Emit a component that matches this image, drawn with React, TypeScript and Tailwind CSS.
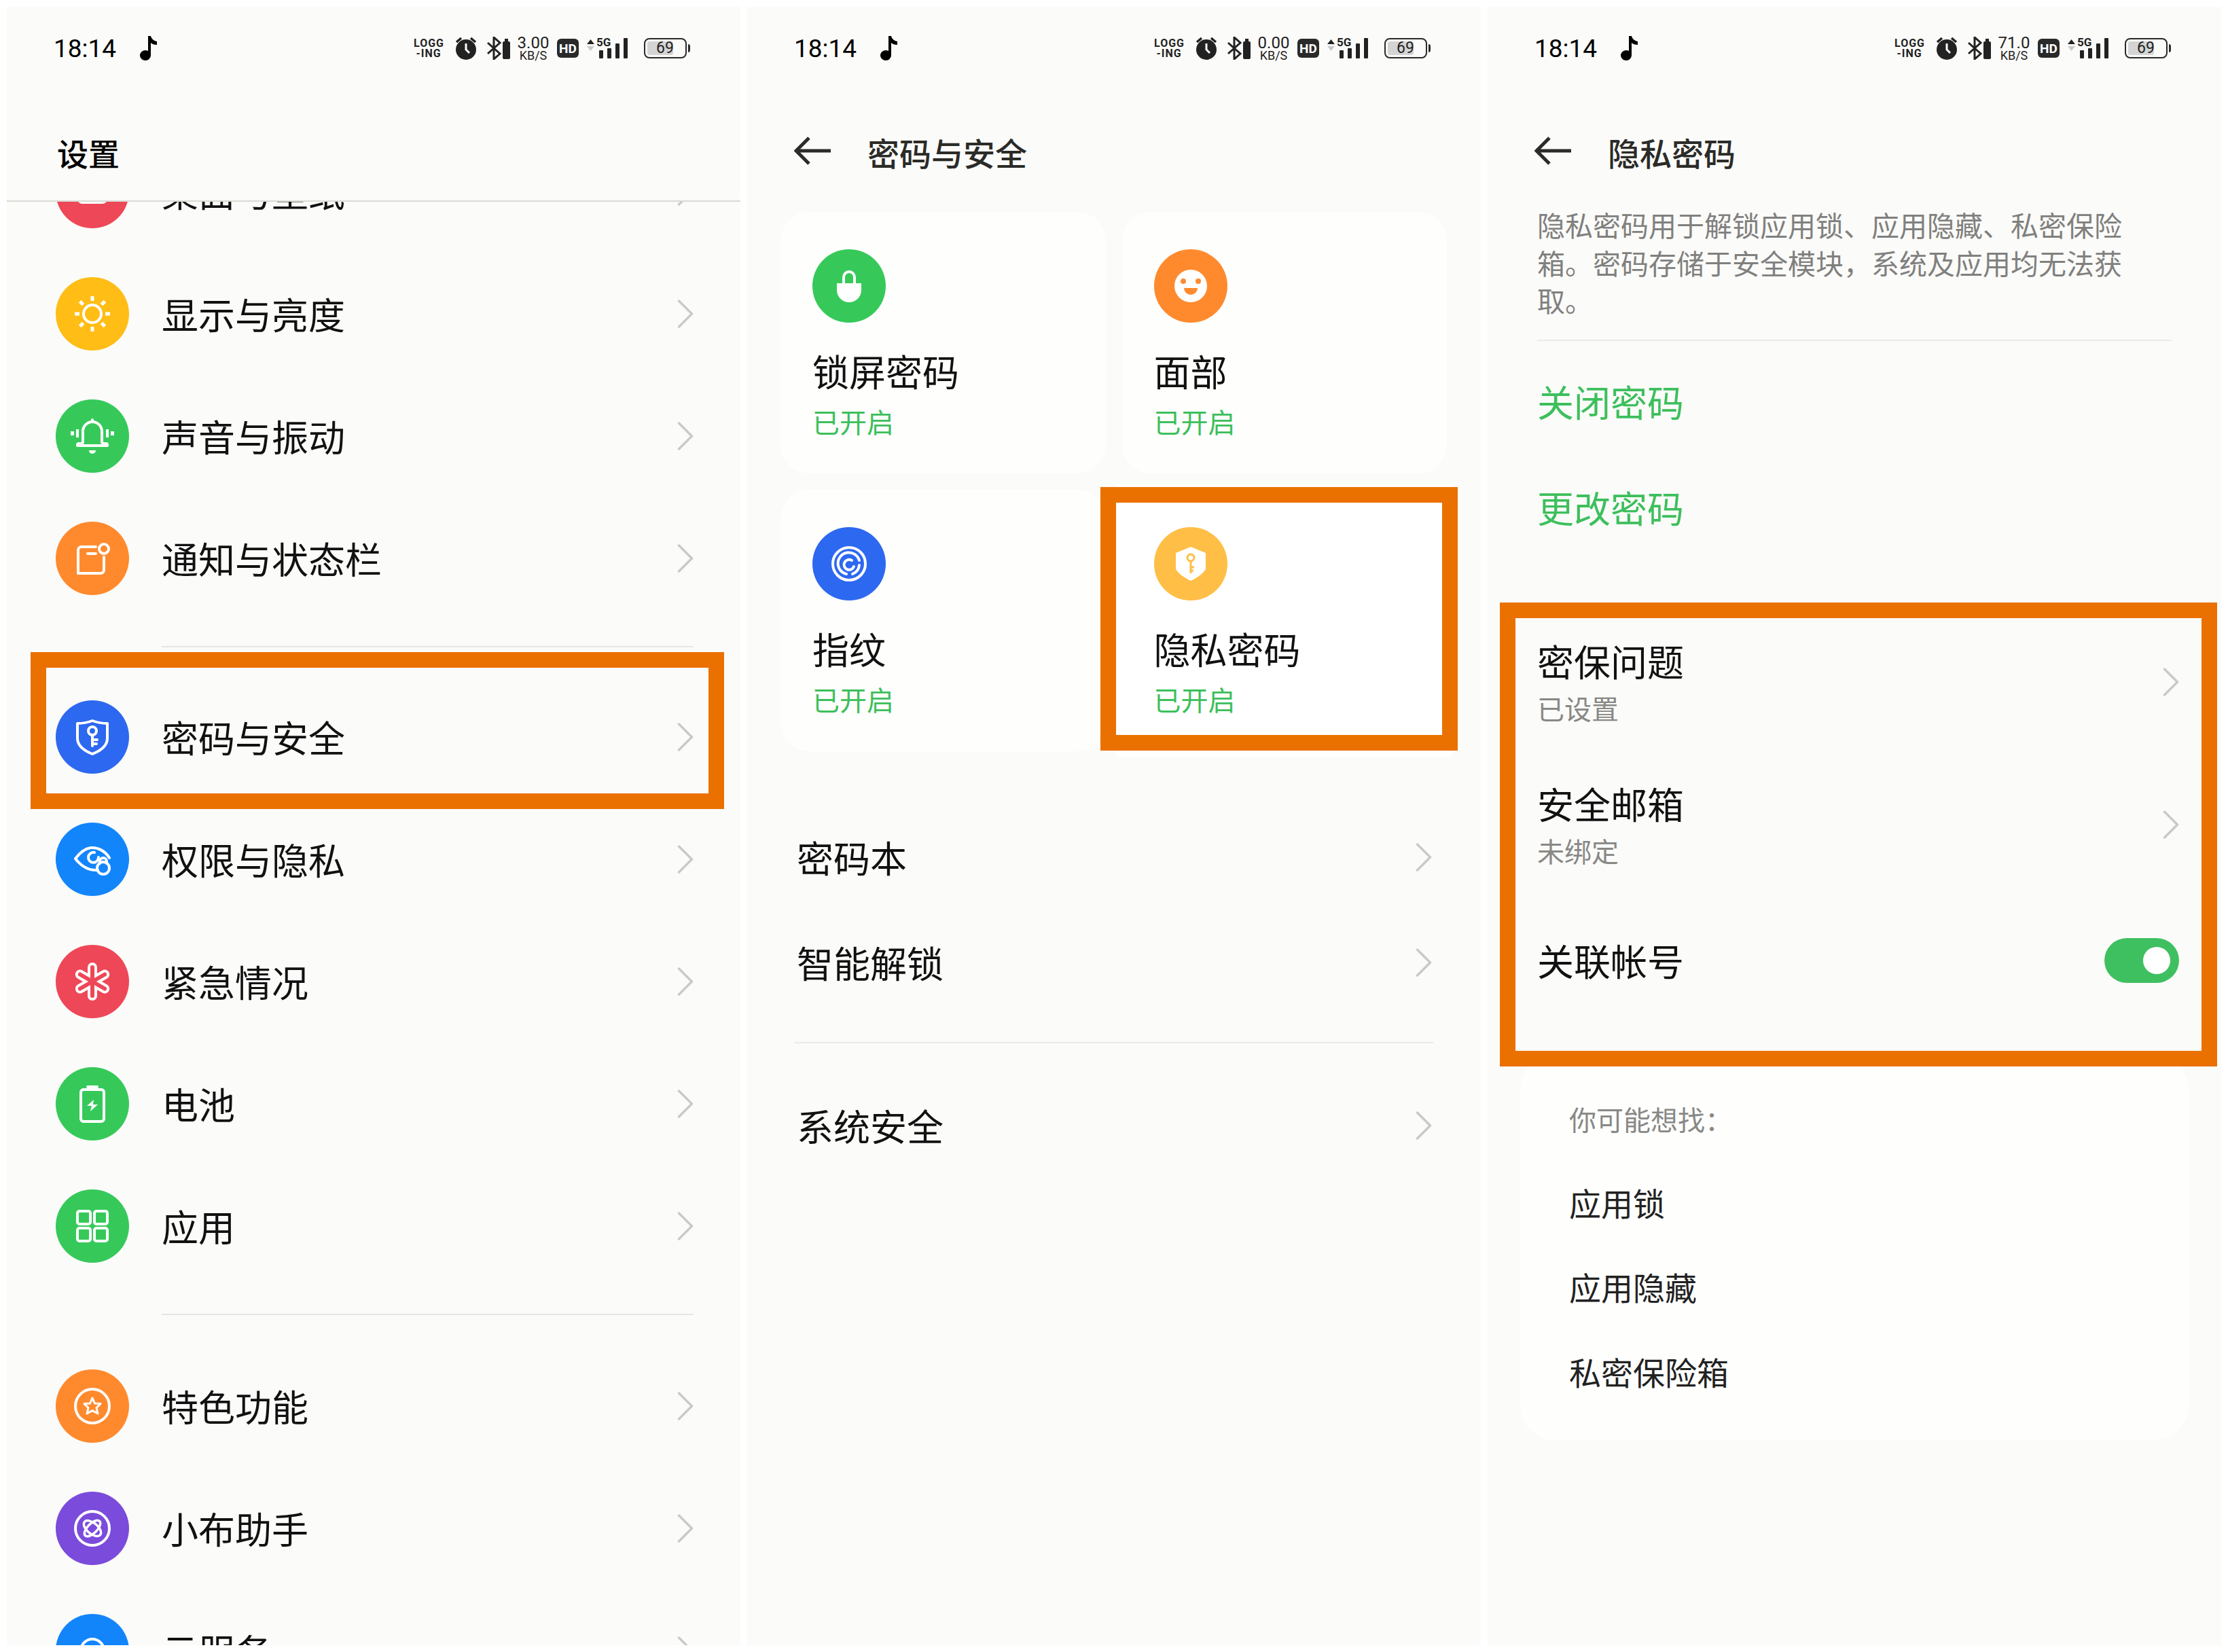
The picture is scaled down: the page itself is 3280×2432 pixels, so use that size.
import type { ReactNode } from "react"

const W = { fill: "none", stroke: "#fff", strokeWidth: 4, strokeLinecap: "round", strokeLinejoin: "round" } as const

// white line icons, centred on 0,0 in a 108px circle
const icons: Record<string, ReactNode> = {
  desktop: <rect x="-20" y="-20" width="40" height="36" rx="5" {...W} />,
  sun: (
    <g>
      <circle r="13" {...W} />
      <g fill="#fff">
        {[0, 45, 90, 135, 180, 225, 270, 315].map((a) => (
          <rect key={a} x="-2.5" y="-26" width="5" height="7" transform={`rotate(${a})`} />
        ))}
      </g>
    </g>
  ),
  bell: (
    <g>
      <path d="M-14 9 V-7 a14 14 0 0 1 28 0 V9 a3 3 0 0 0 3 2 h3 a2 2 0 0 1 2 2 v1 h-44 v-1 a2 2 0 0 1 2 -2 h3 a3 3 0 0 0 3 -2 Z" {...W} />
      <path d="M0 -24 v3" {...W} />
      <path d="M-5 21 h10 a5 5 0 0 1 -10 0 Z" fill="#fff" />
      <g fill="#fff">
        <rect x="-24" y="-10" width="4" height="12" />
        <rect x="20" y="-10" width="4" height="12" />
        <rect x="-32" y="-7" width="5" height="6" />
        <rect x="27" y="-7" width="5" height="6" />
      </g>
    </g>
  ),
  notify: (
    <g>
      <path d="M5 -17 H-16 a5 5 0 0 0 -5 5 V22 H12 a5 5 0 0 0 5 -5 V-2" {...W} />
      <path d="M-7 -7 H5" {...W} />
      <circle cx="17" cy="-14" r="7" {...W} />
    </g>
  ),
  shield: (
    <g>
      <path d="M0 -24 C8 -21 15 -20 22 -20 V2 C22 14 10 21 0 25 C-10 21 -22 14 -22 2 V-20 C-15 -20 -8 -21 0 -24 Z" {...W} />
      <circle cy="-9" r="6" {...W} />
      <path d="M0 -3 V13 M0 4 H7 M0 10 H6" {...W} />
    </g>
  ),
  eye: (
    <g>
      <path d="M25 -2 C19 -12 8 -18 -2 -17 C-11 -16 -19 -9 -25 -1 C-17 10 -5 17 8 16" {...W} />
      <path d="M3 -10 A7.5 7.5 0 1 0 9 -3" {...W} />
      <circle cx="16" cy="13" r="9" {...W} />
      <path d="M11 6 v-3 a5 5 0 0 1 10 0 v3" {...W} />
    </g>
  ),
  star6: (
    <g strokeLinecap="round" fill="none">
      {[0, 60, 120].map((a) => (
        <path key={a} d="M0 -21 V21" stroke="#fff" strokeWidth="14" transform={`rotate(${a})`} />
      ))}
      {[0, 60, 120].map((a) => (
        <path key={a} d="M0 -21 V21" stroke="#ee4757" strokeWidth="6" transform={`rotate(${a})`} />
      ))}
    </g>
  ),
  battery: (
    <g>
      <rect x="-17" y="-21" width="34" height="47" rx="4" {...W} />
      <path d="M-7 -25 H7" {...W} />
      <path d="M2 -6 L-8 3 H-1 L-3 11 L8 1 H1 Z" fill="#fff" />
    </g>
  ),
  apps: (
    <g>
      <rect x="-22" y="-22" width="19" height="19" rx="3" {...W} />
      <rect x="3" y="-22" width="19" height="19" rx="3" {...W} />
      <rect x="-22" y="3" width="19" height="19" rx="3" {...W} />
      <rect x="3" y="3" width="19" height="19" rx="3" {...W} />
    </g>
  ),
  feature: (
    <g>
      <circle r="25" {...W} />
      <path d="M0 -12 L3.5 -4 L12 -3.5 L6 2.5 L8 11 L0 6.5 L-8 11 L-6 2.5 L-12 -3.5 L-3.5 -4 Z" {...W} strokeWidth="3" />
    </g>
  ),
  breeno: (
    <g>
      <circle r="25" {...W} />
      <g transform="rotate(-45)">
        <ellipse rx="15" ry="7" {...W} strokeWidth="3.5" />
      </g>
      <g transform="rotate(40)">
        <ellipse rx="15" ry="8" {...W} strokeWidth="3.5" />
      </g>
    </g>
  ),
  cloud: <circle r="17" {...W} />,
  lock: (
    <g>
      <path d="M-18 -4 H18 V6 A18 18 0 0 1 -18 6 Z" fill="#fff" />
      <path d="M-8 -4 V-13 A8 8 0 0 1 8 -13 V-4" {...W} />
    </g>
  ),
  face: (
    <g>
      <circle r="24" fill="#fff" />
      <circle cx="-11" cy="-7" r="4" fill="#ff8a2d" />
      <circle cx="11" cy="-7" r="4" fill="#ff8a2d" />
      <path d="M-10 3 H10 A10 10 0 0 1 -10 3 Z" fill="#ff8a2d" />
    </g>
  ),
  finger: (
    <g>
      <circle r="24" {...W} />
      <path d="M-4 15 A16 16 0 1 1 15 -5" {...W} />
      <path d="M15 2 A16 16 0 0 1 5 15" {...W} />
      <path d="M4 -5 A7.5 7.5 0 1 0 7 4" {...W} />
    </g>
  ),
  privacy: (
    <g>
      <path d="M0 -25 L22 -16 V8 C18 15 8 21 0 25 C-8 21 -18 15 -22 8 V-16 Z" fill="#fff" />
      <circle cy="-9" r="5" fill="none" stroke="#ffbe45" strokeWidth="3" />
      <path d="M0 -4 V14 M0 5 H5 M0 10 H4" stroke="#ffbe45" strokeWidth="3" fill="none" />
    </g>
  ),
}

function CircleIcon({ name, bg }: { name: string; bg: string }) {
  return (
    <div className={`flex h-[108px] w-[108px] shrink-0 items-center justify-center rounded-full ${bg}`}>
      <svg width="108" height="108" viewBox="-54 -54 108 108">
        {icons[name]}
      </svg>
    </div>
  )
}

function Chevron() {
  return (
    <svg width="24" height="42" viewBox="0 0 24 42" className="shrink-0">
      <path d="M2.5 2 L21.5 21 L2.5 40" transform="" fill="none" stroke="#c9c9c7" strokeWidth="3.5" strokeLinecap="round" strokeLinejoin="round" />
    </svg>
  )
}

function StatusBar({ speed }: { speed: string }) {
  return (
    <div className="flex h-[122px] shrink-0 items-center pl-[69px] pr-[74px] text-[#222] font-['Roboto',sans-serif]">
      <span className="text-[37px] leading-none text-black">18:14</span>
      <svg width="27" height="36" viewBox="0 0 27 36" className="ml-[34px]">
        <path d="M13 0 h4 c1 4 4 7 9 8 v5 c-4 0 -7 -1 -9 -3 v18 a8 7.5 0 1 1 -4 -6 Z" fill="#000" />
      </svg>
      <div className="ml-auto flex items-center">
        <div className="w-[44px] text-center text-[16px] font-bold leading-[15px] tracking-[1px]">
          <div>LOGG</div>
          <div>-ING</div>
        </div>
        <svg width="34" height="36" viewBox="0 0 34 36" className="ml-[16px]">
          <circle cx="17" cy="20" r="15" fill="#222" />
          <path d="M17 11 V20 L22 25" fill="none" stroke="#fbfbf9" strokeWidth="3" />
          <path d="M3 9 L10 3 M31 9 L24 3" stroke="#222" strokeWidth="3.5" />
        </svg>
        <svg width="34" height="34" viewBox="0 0 34 34" className="ml-[14px]">
          <path d="M1 9 L19 25 L10 33 V1 L19 9 L1 25" fill="none" stroke="#222" strokeWidth="3" />
          <rect x="23" y="7" width="11" height="26" rx="2" fill="#222" />
          <rect x="26" y="3" width="5" height="4" fill="#222" />
        </svg>
        <div className="ml-[8px] w-[52px] text-center leading-none">
          <div className="text-[24px] leading-[21px]">{speed}</div>
          <div className="text-[18px] leading-[16px]">KB/S</div>
        </div>
        <div className="ml-[9px] flex h-[28px] w-[32px] items-center justify-center rounded-[6px] bg-[#2a2a2a] text-[19px] font-bold leading-none text-white">
          HD
        </div>
        <svg width="11" height="20" viewBox="0 0 11 20" className="ml-[12px] mb-[8px]">
          <path d="M5.5 1 L11 8 H0 Z" fill="#222" />
          <path d="M5.5 18 L11 11 H0 Z" fill="#c9c9c9" />
        </svg>
        <div className="relative ml-[3px] flex h-[30px] w-[58px] items-end gap-[6px] pl-[4px]">
          <span className="absolute left-0 top-[-3px] text-[17px] font-bold leading-[18px]">5G</span>
          <i className="h-[12px] w-[6px] rounded-[1px] bg-[#222]" />
          <i className="h-[15px] w-[6px] rounded-[1px] bg-[#222]" />
          <i className="h-[22px] w-[6px] rounded-[1px] bg-[#222]" />
          <i className="h-[30px] w-[6px] rounded-[1px] bg-[#222]" />
        </div>
        <div className="relative ml-[12px] flex h-[30px] w-[63px] items-center rounded-[8px] border-2 border-[#2a2a2a] p-[3px]">
          <div className="h-full w-[38px] rounded-[3px] bg-[#d4d4d4]" />
          <span className="absolute left-[16px] top-[1px] text-[23px] leading-[24px]">69</span>
        </div>
        <div className="ml-[2px] h-[12px] w-[3px] rounded-r-full bg-[#2a2a2a]" />
      </div>
    </div>
  )
}

function BackHeader({ title }: { title: string }) {
  return (
    <div className="flex h-[165px] shrink-0 items-center pl-[69px] pt-[20px]">
      <svg width="56" height="44" viewBox="0 0 56 44" className="mb-[6px]">
        <path d="M54 22 H3 M22 3 L3 22 L22 41" fill="none" stroke="#2b2b28" strokeWidth="5" strokeLinejoin="miter" />
      </svg>
      <h1 className="ml-[52px] mb-[2px] text-[47px] font-medium leading-none text-[#2b2b28]">{title}</h1>
    </div>
  )
}

function Row({ icon, bg, label }: { icon: string; bg: string; label: string }) {
  return (
    <div className="flex h-[180px] items-center pl-[72px] pr-[69px]">
      <CircleIcon name={icon} bg={bg} />
      <span className="ml-[48px] flex-1 text-[54px] leading-none text-[#111]">{label}</span>
      <Chevron />
    </div>
  )
}

function SettingsPhone() {
  return (
    <div className="relative flex h-[2412px] w-[1080px] flex-col overflow-hidden bg-[#fbfbf9]">
      <div className="relative z-10 bg-[#fbfbf9]">
        <StatusBar speed="3.00" />
        <div className="flex h-[165px] items-center border-b-2 border-[#d9d9d5] pl-[74px] pt-[20px]">
          <h1 className="text-[46px] font-medium leading-none text-black">设置</h1>
        </div>
      </div>
      <div className="-mt-[105px]">
        <Row icon="desktop" bg="bg-[#ee4757]" label="桌面与壁纸" />
        <Row icon="sun" bg="bg-[#ffbd16]" label="显示与亮度" />
        <Row icon="bell" bg="bg-[#36c95a]" label="声音与振动" />
        <Row icon="notify" bg="bg-[#ff8a2d]" label="通知与状态栏" />
        <div className="ml-[228px] mr-[69px] mt-[39px] mb-[42px] h-[2px] bg-[#e6e6e4]" />
        <Row icon="shield" bg="bg-[#2d68f0]" label="密码与安全" />
        <Row icon="eye" bg="bg-[#1385fb]" label="权限与隐私" />
        <Row icon="star6" bg="bg-[#ee4757]" label="紧急情况" />
        <Row icon="battery" bg="bg-[#36c95a]" label="电池" />
        <Row icon="apps" bg="bg-[#36c95a]" label="应用" />
        <div className="ml-[228px] mr-[69px] mt-[39px] mb-[44px] h-[2px] bg-[#e6e6e4]" />
        <Row icon="feature" bg="bg-[#ff8a2d]" label="特色功能" />
        <Row icon="breeno" bg="bg-[#7b4bdc]" label="小布助手" />
        <Row icon="cloud" bg="bg-[#1385fb]" label="云服务" />
      </div>
      <div className="absolute left-[35px] top-[950px] z-20 h-[231px] w-[1021px] border-[23px] border-[#ea7100]" />
    </div>
  )
}

function Card({ icon, bg, title, flat }: { icon: string; bg: string; title: string; flat?: boolean }) {
  return (
    <div className={flat ? "h-[385px] bg-white pl-[47px] pt-[55px] shadow-[0_0_0_8px_#fff]" : "h-[385px] rounded-[42px] bg-[#fefefc] pl-[47px] pt-[55px]"}>
      <CircleIcon name={icon} bg={bg} />
      <div className="mt-[39px] text-[54px] leading-[64px] text-[#111]">{title}</div>
      <div className="mt-[17px] text-[40px] leading-[50px] text-[#3dbf5c]">已开启</div>
    </div>
  )
}

function PlainRow({ label, h = "h-[155px]" }: { label: string; h?: string }) {
  return (
    <div className={`flex items-center pl-[73px] pr-[72px] ${h}`}>
      <span className="flex-1 text-[54px] leading-none text-[#111]">{label}</span>
      <Chevron />
    </div>
  )
}

function SecurityPhone() {
  return (
    <div className="relative flex h-[2412px] w-[1080px] flex-col overflow-hidden bg-[#fbfbf9]">
      <StatusBar speed="0.00" />
      <BackHeader title="密码与安全" />
      <div className="ml-[49px] mr-[50px] mt-[15px] grid grid-cols-2 gap-[24px]">
        <Card icon="lock" bg="bg-[#36c95a]" title="锁屏密码" />
        <Card icon="face" bg="bg-[#ff8a2d]" title="面部" />
        <Card icon="finger" bg="bg-[#2d68f0]" title="指纹" />
        <Card icon="privacy" bg="bg-[#ffbe45]" title="隐私密码" flat />
      </div>
      <div className="mt-[78px]">
        <PlainRow label="密码本" />
        <PlainRow label="智能解锁" />
        <div className="ml-[70px] mr-[70px] mt-[40px] mb-[43px] h-[2px] bg-[#ebebe9]" />
        <PlainRow label="系统安全" />
      </div>
      <div className="absolute left-[520px] top-[707px] z-20 h-[388px] w-[526px] border-[23px] border-[#ea7100]" />
    </div>
  )
}

function DetailRow({ title, sub }: { title: string; sub: string }) {
  return (
    <div className="flex h-[210px] items-center pl-[73px] pr-[62px]">
      <div className="flex-1">
        <div className="text-[54px] leading-[64px] text-[#111]">{title}</div>
        <div className="mt-[12px] text-[40px] leading-[50px] text-[#888886]">{sub}</div>
      </div>
      <Chevron />
    </div>
  )
}

function PrivacyPhone() {
  return (
    <div className="relative flex h-[2412px] w-[1080px] flex-col overflow-hidden bg-[#fbfbf9]">
      <StatusBar speed="71.0" />
      <BackHeader title="隐私密码" />
      <p className="ml-[73px] mt-[6px] w-[870px] text-[41px] leading-[55.5px] text-[#80807e]">
        隐私密码用于解锁应用锁、应用隐藏、私密保险箱。密码存储于安全模块，系统及应用均无法获取。
      </p>
      <div className="ml-[73px] mr-[73px] mt-[30px] h-[2px] bg-[#ebebe9]" />
      <div className="mt-[57px] pl-[73px] text-[54px] leading-[64px] text-[#3dbf5c]">关闭密码</div>
      <div className="mt-[92px] pl-[73px] text-[54px] leading-[64px] text-[#3dbf5c]">更改密码</div>
      <div className="mt-[120px]">
        <DetailRow title="密保问题" sub="已设置" />
        <DetailRow title="安全邮箱" sub="未绑定" />
        <div className="flex h-[190px] items-center pl-[73px] pr-[62px]">
          <span className="flex-1 text-[54px] leading-none text-[#111]">关联帐号</span>
          <div className="flex h-[66px] w-[110px] items-center justify-end rounded-full bg-[#3fc060] pr-[13px]">
            <div className="h-[40px] w-[40px] rounded-full bg-white" />
          </div>
        </div>
      </div>
      <div className="ml-[48px] mt-[45px] h-[566px] w-[984px] rounded-[50px] bg-[#fefefc] px-[72px] pt-[68px]">
        <div className="text-[40px] leading-[50px] text-[#888886]">你可能想找：</div>
        <div className="mt-[73px] text-[47px] leading-[50px] text-[#222]">应用锁</div>
        <div className="mt-[74px] text-[47px] leading-[50px] text-[#222]">应用隐藏</div>
        <div className="mt-[75px] text-[47px] leading-[50px] text-[#222]">私密保险箱</div>
      </div>
      <div className="absolute left-[18px] top-[877px] z-20 h-[683px] w-[1056px] border-[23px] border-[#ea7100]" />
    </div>
  )
}

export default function App() {
  return (
    <div lang="zh-CN" className="flex h-[2432px] w-[3280px] gap-[10px] overflow-hidden bg-white p-[10px] font-['Noto_Sans_CJK_SC','Noto_Sans',sans-serif]">
      <SettingsPhone />
      <SecurityPhone />
      <PrivacyPhone />
    </div>
  )
}
